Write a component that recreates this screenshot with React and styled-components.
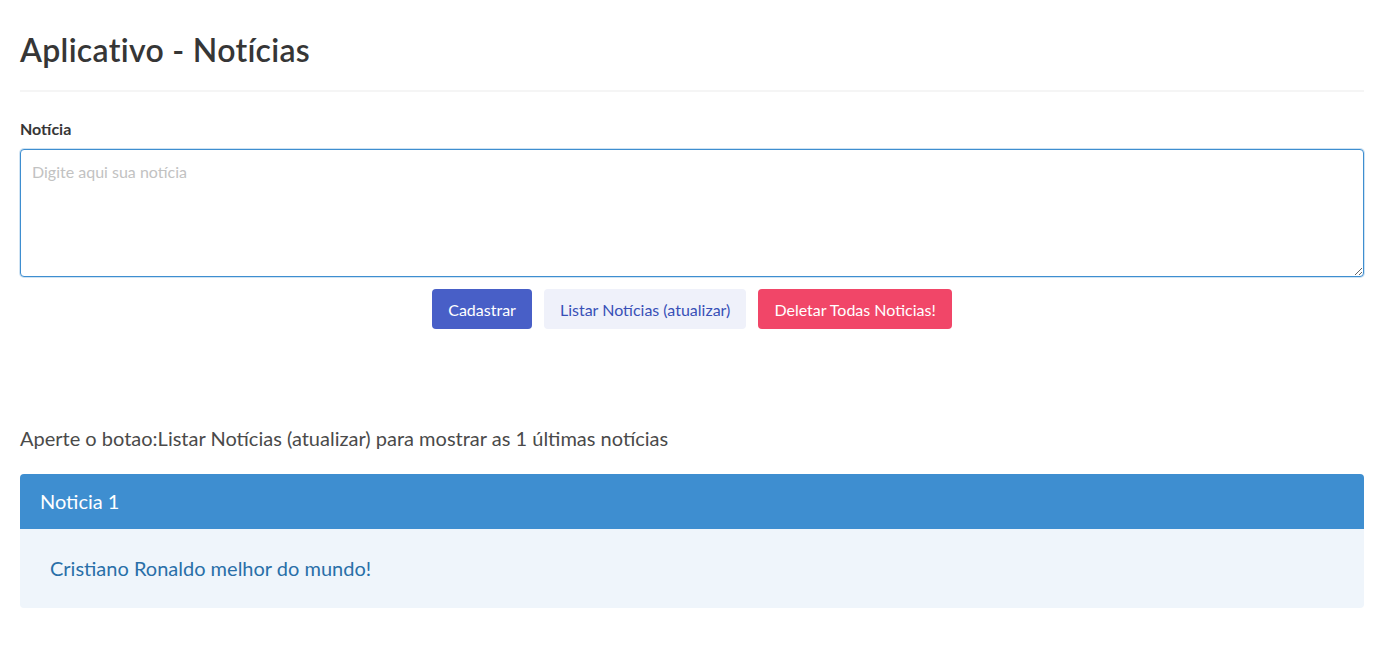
import React from "react";
import styled, { createGlobalStyle } from "styled-components";

const GlobalStyle = createGlobalStyle`
    html, body {
        margin: 0;
        padding: 0;
        background: #ffffff;
    }
    body {
        font-family: "Segoe UI", "Lato", "Noto Sans", sans-serif;
        color: #4a4a4a;
        font-size: 16px;
        line-height: 1.5;
    }
    * {
        box-sizing: border-box;
    }
`;

const Page = styled.div`
    padding: 32px 24px 40px 20px;
`;

const Title = styled.h1`
    margin: 0;
    font-size: 32px;
    font-weight: 600;
    line-height: 36px;
    letter-spacing: 0.3px;
    color: #363636;
`;

const Divider = styled.hr`
    border: none;
    height: 2px;
    background: #f5f5f5;
    margin: 22px 0 25px;
`;

const Label = styled.label`
    display: block;
    font-size: 16px;
    font-weight: 700;
    color: #363636;
    line-height: 24px;
    margin-bottom: 8px;
`;

const TextArea = styled.textarea`
    display: block;
    width: 100%;
    height: 128px;
    padding: 10px 11px;
    font-family: inherit;
    font-size: 16px;
    line-height: 1.5;
    color: #363636;
    border: 1px solid #3e8ed0;
    border-radius: 4px;
    box-shadow: 0 0 0 1px rgba(62, 142, 208, 0.25);
    outline: none;
    resize: vertical;
    &::placeholder {
        color: #c2c2c2;
    }
`;

const Buttons = styled.div`
    display: flex;
    justify-content: center;
    gap: 12px;
    margin-top: 12px;
`;

const Button = styled.button`
    height: 40px;
    padding: 0 16px;
    font-family: inherit;
    font-size: 16px;
    border: none;
    border-radius: 4px;
    cursor: pointer;
    background: ${p => p.$bg};
    color: ${p => p.$fg};
`;

const Hint = styled.p`
    margin: 94px 0 0;
    font-size: 20px;
    line-height: 30px;
    color: #4a4a4a;
`;

const Message = styled.article`
    margin-top: 21px;
    border-radius: 4px;
    overflow: hidden;
    font-size: 20px;
`;

const MessageHeader = styled.div`
    background: #3e8ed0;
    color: #ffffff;
    padding: 15px 20px;
    line-height: 25px;
`;

const MessageBody = styled.div`
    background: #eff5fb;
    color: #296fa8;
    padding: 25px 30px;
    line-height: 29px;
`;

const App = () => {

    //fake data
    const noticias = ["Cristiano Ronaldo melhor do mundo!"];

    return (
        <>
            <GlobalStyle />
            <Page>
                <Title>Aplicativo - Notícias</Title>
                <Divider />

                <Label htmlFor="noticia">Notícia</Label>
                <TextArea id="noticia" placeholder="Digite aqui sua notícia" autoFocus />

                <Buttons>
                    <Button $bg="#485fc7" $fg="#ffffff">Cadastrar</Button>
                    <Button $bg="#eff1fa" $fg="#3850b7">Listar Notícias (atualizar)</Button>
                    <Button $bg="#f14668" $fg="#ffffff">Deletar Todas Noticias!</Button>
                </Buttons>

                <Hint>Aperte o botao:Listar Notícias (atualizar) para mostrar as {noticias.length} últimas notícias</Hint>

                {noticias.map((n, i) => (
                    <Message key={i}>
                        <MessageHeader>Noticia {i + 1}</MessageHeader>
                        <MessageBody>{n}</MessageBody>
                    </Message>
                ))}
            </Page>
        </>
    );
};

export default App;
